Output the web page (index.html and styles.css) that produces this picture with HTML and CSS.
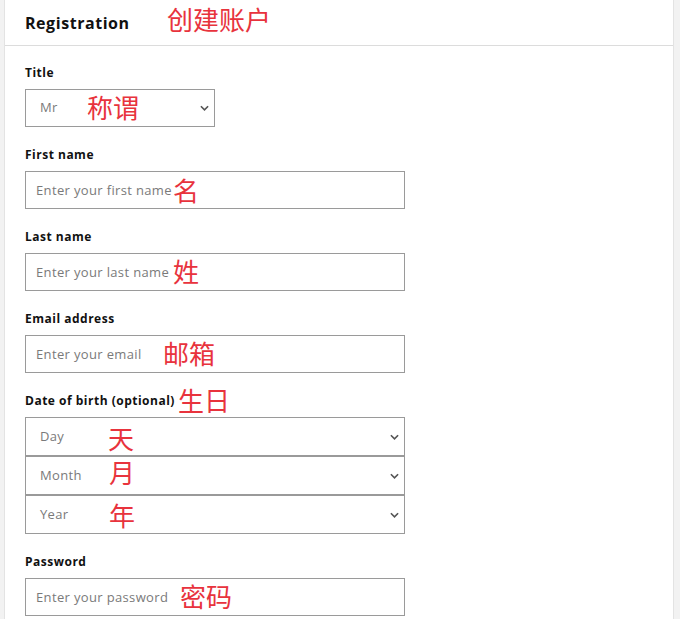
FILE: index.html
```html
<!DOCTYPE html>
<html lang="en">
<head>
<meta charset="utf-8">
<title>Registration</title>
<link rel="stylesheet" href="styles.css">
</head>
<body>
<div class="panel">
  <div class="header">
    <h1 class="title">Registration</h1>
  </div>
  <form class="form">
    <div class="group">
      <label class="label">Title</label>
      <div class="select select-short"><span>Mr</span><svg class="chev" viewBox="0 0 10 6" width="9" height="6"><path d="M1 1l4 4 4-4" fill="none" stroke="#555" stroke-width="1.8"/></svg></div>
    </div>
    <div class="group">
      <label class="label">First name</label>
      <div class="input">Enter your first name</div>
    </div>
    <div class="group">
      <label class="label">Last name</label>
      <div class="input">Enter your last name</div>
    </div>
    <div class="group">
      <label class="label">Email address</label>
      <div class="input">Enter your email</div>
    </div>
    <div class="group">
      <label class="label">Date of birth (optional)</label>
      <div class="select"><span>Day</span><svg class="chev" viewBox="0 0 10 6" width="9" height="6"><path d="M1 1l4 4 4-4" fill="none" stroke="#555" stroke-width="1.8"/></svg></div>
      <div class="select"><span>Month</span><svg class="chev" viewBox="0 0 10 6" width="9" height="6"><path d="M1 1l4 4 4-4" fill="none" stroke="#555" stroke-width="1.8"/></svg></div>
      <div class="select"><span>Year</span><svg class="chev" viewBox="0 0 10 6" width="9" height="6"><path d="M1 1l4 4 4-4" fill="none" stroke="#555" stroke-width="1.8"/></svg></div>
    </div>
    <div class="group">
      <label class="label">Password</label>
      <div class="input">Enter your password</div>
    </div>
  </form>

  <span class="note n-head">创建账户</span>
  <span class="note n-title">称谓</span>
  <span class="note n-first">名</span>
  <span class="note n-last">姓</span>
  <span class="note n-email">邮箱</span>
  <span class="note n-dob">生日</span>
  <span class="note n-day">天</span>
  <span class="note n-month">月</span>
  <span class="note n-year">年</span>
  <span class="note n-pass">密码</span>
</div>
</body>
</html>
```
FILE: styles.css
```css
html, body {
  margin: 0;
  padding: 0;
  background: #f2f2f2;
  height: 100%;
}
body {
  font-family: "Open Sans", "Liberation Sans", sans-serif;
  overflow: hidden;
}
.panel {
  position: relative;
  margin-left: 4px;
  width: 670px;
  min-height: 100%;
  box-sizing: border-box;
  background: #fff;
  border-left: 1px solid #e3e3e3;
  border-right: 1px solid #e3e3e3;
}
.header {
  height: 45px;
  border-bottom: 1px solid #dcdcdc;
  padding-left: 20px;
  display: flex;
  align-items: center;
}
.title {
  margin: 0;
  font-size: 16px;
  font-weight: 700;
  color: #111;
  letter-spacing: 0.55px;
}
.form {
  padding: 19px 20px 0 20px;
}
.group {
  margin-bottom: 20px;
}
.label {
  display: block;
  font-size: 12px;
  line-height: 16px;
  font-weight: 700;
  color: #111;
  margin-bottom: 8px;
  letter-spacing: 0.5px;
}
.input {
  width: 380px;
  height: 38px;
  box-sizing: border-box;
  border: 1px solid #9a9a9a;
  padding-left: 10px;
  display: flex;
  align-items: center;
  font-size: 13px;
  color: #7a7a7a;
  letter-spacing: 0.35px;
}
.select {
  width: 380px;
  height: 39px;
  box-sizing: border-box;
  border: 1px solid #9a9a9a;
  padding: 0 5px 0 14px;
  display: flex;
  align-items: center;
  justify-content: space-between;
  font-size: 13px;
  color: #7a7a7a;
  letter-spacing: 0.35px;
}
.select span {
  margin-top: -2px;
}
.select-short {
  width: 190px;
  height: 38px;
}
.chev {
  display: block;
}
.note {
  position: absolute;
  font-family: "Noto Sans CJK SC", sans-serif;
  font-size: 26px;
  line-height: 24px;
  color: #e8333d;
  white-space: nowrap;
}
.n-head { left: 162px; top: 7px; }
.n-title { left: 82px; top: 95px; }
.n-first { left: 168px; top: 178px; }
.n-last { left: 168px; top: 259px; }
.n-email { left: 158px; top: 341px; }
.n-dob { left: 173px; top: 388px; }
.n-day { left: 103px; top: 426px; }
.n-month { left: 104px; top: 460px; }
.n-year { left: 104px; top: 503px; }
.n-pass { left: 175px; top: 584px; }
```
